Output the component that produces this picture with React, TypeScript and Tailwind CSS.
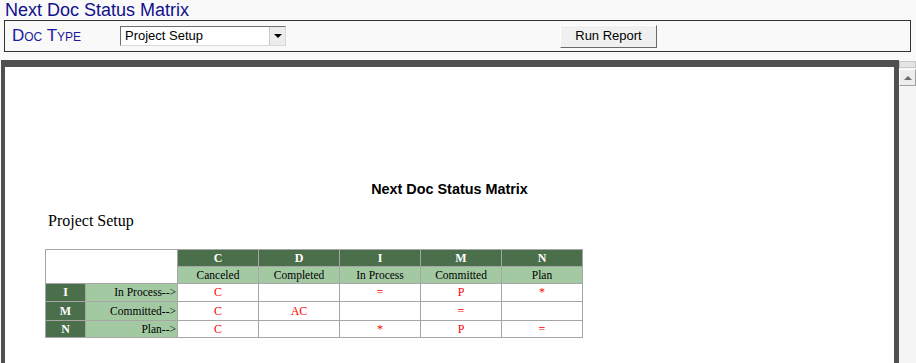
import * as React from 'react';

const COLS = [
  { code: 'C', label: 'Canceled' },
  { code: 'D', label: 'Completed' },
  { code: 'I', label: 'In Process' },
  { code: 'M', label: 'Committed' },
  { code: 'N', label: 'Plan' },
];

const ROWS = [
  { code: 'I', label: 'In Process-->', cells: ['C', '', '=', 'P', '*'], h: 'h-[18px]' },
  { code: 'M', label: 'Committed-->', cells: ['C', 'AC', '', '=', ''], h: 'h-[19px]' },
  { code: 'N', label: 'Plan-->', cells: ['C', '', '*', 'P', '='], h: 'h-[17px]' },
];

const SERIF = '"Liberation Serif", "Times New Roman", serif';

function Toolbar() {
  return (
    <div className="ml-[4px] w-[907px] h-[32px] border border-[#333333] flex items-center">
      <div
        className="ml-[7px] w-[107px] text-[17px] leading-[20px] text-[#1a1a9c]"
        style={{ fontVariant: 'small-caps' }}
      >
        Doc Type
      </div>
      <div className="ml-[1px] w-[166px] h-[20px] flex bg-white border border-t-[#6f6f6f] border-l-[#6f6f6f] border-b-[#d8d8d8] border-r-[#d8d8d8]">
        <div className="flex-1 pl-[4px] text-[13px] leading-[18px] text-black">Project Setup</div>
        <div className="w-[16px] h-[18px] bg-[#ececec] border-l border-[#c8c8c8] flex items-center justify-center">
          <div className="w-0 h-0 border-l-[4px] border-r-[4px] border-t-[4px] border-l-transparent border-r-transparent border-t-black" />
        </div>
      </div>
      <button className="ml-[274px] w-[97px] h-[23px] bg-[#f0f0f0] border border-t-white border-l-white border-b-[#6a6a6a] border-r-[#6a6a6a] text-[13px] leading-[20px] text-black">
        Run Report
      </button>
    </div>
  );
}

function Matrix() {
  return (
    <table className="ml-[40px] border-collapse text-[11px]" style={{ fontFamily: SERIF }}>
      <tbody>
        <tr className="h-[17px]">
          <td rowSpan={2} colSpan={2} className="w-[132px] border border-[#a6a6a6] bg-white" />
          {COLS.map((c) => (
            <td key={c.code} className="w-[81px] border border-[#a6a6a6] bg-[#4b6f4b] text-white font-bold text-[12px] text-center leading-[15px]">
              {c.code}
            </td>
          ))}
        </tr>
        <tr className="h-[17px]">
          {COLS.map((c) => (
            <td key={c.code} className="border border-[#a6a6a6] bg-[#a3c9a3] text-black text-[11.5px] text-center leading-[15px]">
              {c.label}
            </td>
          ))}
        </tr>
        {ROWS.map((r) => (
          <tr key={r.code} className={r.h}>
            <td className="w-[40px] border border-[#a6a6a6] bg-[#4b6f4b] text-white font-bold text-[12px] text-center leading-[15px]">
              {r.code}
            </td>
            <td className="w-[92px] border border-[#a6a6a6] bg-[#a3c9a3] text-black text-[11.5px] text-right pr-[1px] leading-[15px]">
              {r.label}
            </td>
            {r.cells.map((t, i) => (
              <td key={i} className="border border-[#a6a6a6] bg-white text-[#ff0000] text-[12px] text-center leading-[15px]">
                {t}
              </td>
            ))}
          </tr>
        ))}
      </tbody>
    </table>
  );
}

function Scrollbar() {
  return (
    <div className="w-[17px] mt-[1px] flex flex-col bg-[#f4f4f4]">
      <div className="h-[7px] bg-[#e4e4e4] border border-[#c8c8c8]" />
      <div className="h-[17px] mt-[1px] bg-[#ededed] border border-t-white border-l-white border-b-[#a0a0a0] border-r-[#a0a0a0] flex items-center justify-center">
        <div className="w-0 h-0 border-l-[4px] border-r-[4px] border-b-[4px] border-l-transparent border-r-transparent border-b-[#6a6a6a]" />
      </div>
      <div className="flex-1 bg-[#f5f5f5]" />
    </div>
  );
}

export default function App() {
  return (
    <div
      className="w-[916px] h-[363px] overflow-hidden bg-[#f9f9f9] flex flex-col"
      style={{ fontFamily: '"Liberation Sans", Arial, sans-serif' }}
    >
      <div className="h-[20px] pl-[5px] text-[18px] leading-[20px] text-[#10108c]">Next Doc Status Matrix</div>
      <Toolbar />
      <div className="mt-[8px] flex flex-1 min-h-0">
        <div className="ml-[1px] w-[898px] border-t-[7px] border-l-[4px] border-r-[5px] border-[#505050] bg-white">
          <div className="mt-[114px] text-center font-bold text-[14.4px] leading-[17px] text-black">
            Next Doc Status Matrix
          </div>
          <div className="mt-[14px] pl-[43px] text-[16px] leading-[18px] text-black" style={{ fontFamily: SERIF }}>
            Project Setup
          </div>
          <div className="mt-[19px]">
            <Matrix />
          </div>
        </div>
        <Scrollbar />
      </div>
    </div>
  );
}
